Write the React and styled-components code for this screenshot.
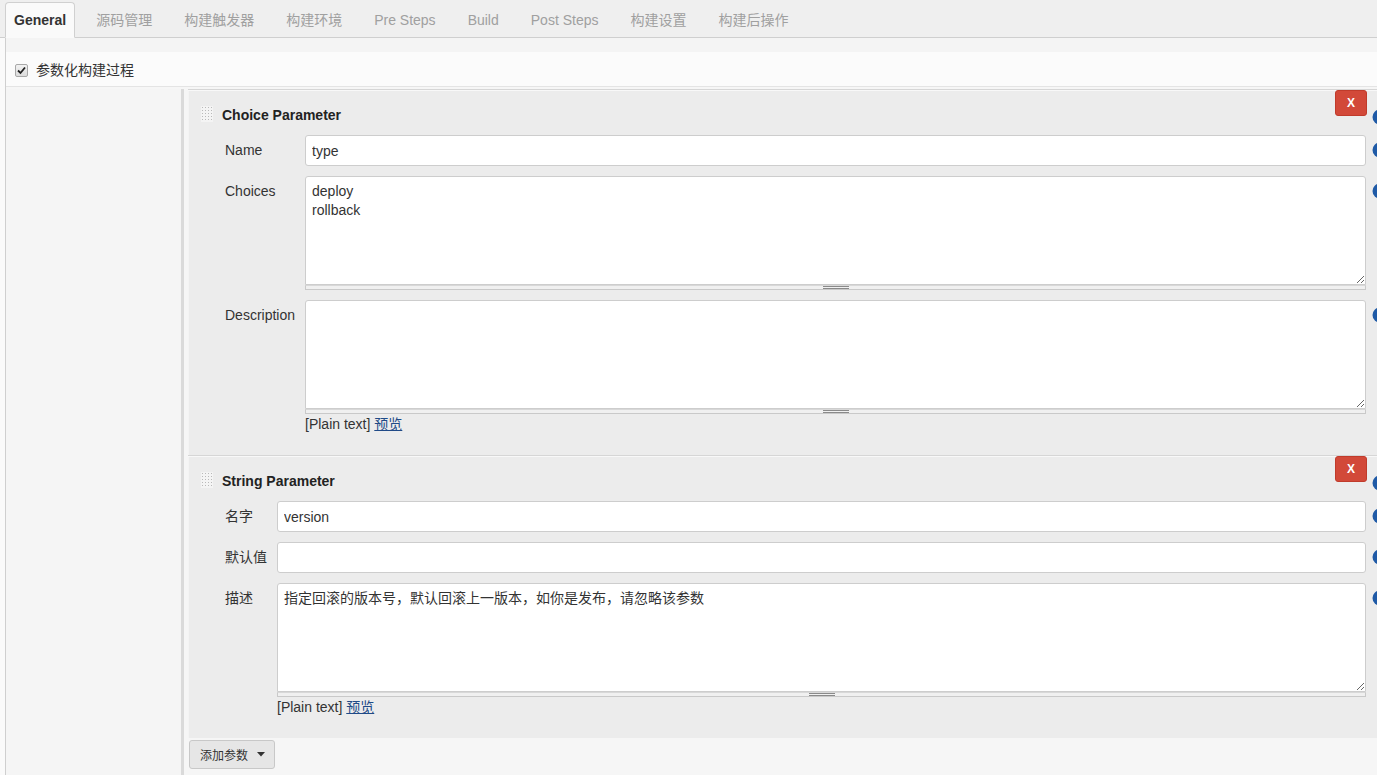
import styled, { createGlobalStyle } from "styled-components";

const GlobalStyle = createGlobalStyle`
  html, body {
    margin: 0;
    padding: 0;
    overflow-x: hidden;
    background: #fafafa;
  }
  body {
    font-family: "Liberation Sans", Arial, "Noto Sans CJK SC", sans-serif;
    font-size: 14px;
    color: #333;
  }
`;

const Page = styled.div`
  width: 100%;
  min-height: 775px;
`;

const TabBar = styled.div`
  display: flex;
  align-items: flex-end;
  gap: 10px;
  height: 37px;
  padding-left: 5px;
  background: #efefef;
  border-bottom: 1px solid #cfcfcf;
`;

const Tab = styled.div`
  height: 34px;
  line-height: 34px;
  padding: ${(props) => (props.active ? "0 8px" : "0 10px")};
  font-size: 14px;
  white-space: nowrap;
  color: ${(props) => (props.active ? "#333" : "#a0a0a0")};
  font-weight: ${(props) => (props.active ? "bold" : "normal")};
  background: ${(props) => (props.active ? "#fafafa" : "transparent")};
  border: 1px solid ${(props) => (props.active ? "#d0d0d0" : "transparent")};
  border-bottom-color: ${(props) => (props.active ? "#fafafa" : "transparent")};
  border-radius: 4px 4px 0 0;
  margin-bottom: -1px;
`;

const Section = styled.div`
  margin-left: 5px;
  border-left: 1px solid #cfcfcf;
  background: #f6f6f6;
`;

const CheckRow = styled.div`
  display: flex;
  align-items: center;
  gap: 8px;
  padding: 24px 9px 8px;
  line-height: 16px;
  background: linear-gradient(#f4f4f4 0, #f4f4f4 14px, #fbfbfb 14px);
  border-bottom: 1px solid #e4e4e4;
`;

const CheckBox = styled.span`
  display: inline-flex;
  align-items: center;
  justify-content: center;
  width: 11px;
  height: 11px;
  border: 1px solid #a8a8a8;
  border-radius: 2px;
  background: linear-gradient(#f2f2f2, #dcdcdc);
`;

const Nested = styled.div`
  display: flex;
  padding-top: 2px;
`;

const Indent = styled.div`
  width: 175px;
  flex-shrink: 0;
  background: #f5f5f5;
`;

const Repeat = styled.div`
  flex: 1;
  margin-right: -11px;
  border-left: 3px solid #dadada;
  padding-left: 4px;
  background: #f6f6f6;
  padding-bottom: 6px;
`;

const Block = styled.div`
  display: grid;
  grid-template-columns: auto 1fr 22px;
  row-gap: 10px;
  align-items: start;
  background: #ececec;
  border-top: 1px solid #d6d6d6;
  box-shadow: inset 0 1px 0 #f8f8f8, inset 1px 0 0 #f4f4f4;
  padding: 0 0 23px 13px;
`;

const TitleRow = styled.div`
  grid-column: 1 / 3;
  display: flex;
  justify-content: space-between;
  align-items: flex-start;
  margin-bottom: 2px;
`;

const TitleLeft = styled.div`
  display: flex;
  align-items: flex-start;
  gap: 9px;
  padding-top: 16px;
`;

const Handle = styled.div`
  width: 12px;
  height: 16px;
  background-color: #f4f4f4;
  background-image: radial-gradient(circle, #b9b9b9 0.8px, transparent 0.9px);
  background-size: 3px 3px;
`;

const Title = styled.div`
  font-weight: bold;
  font-size: 14px;
  line-height: 16px;
  padding-top: 1px;
  color: #222;
`;

const DeleteButton = styled.button`
  width: 32px;
  height: 26px;
  margin-right: -1px;
  border: 1px solid #c03b2b;
  border-radius: 3px;
  background: #d24939;
  color: #fff;
  font-family: "Liberation Sans", Arial, sans-serif;
  font-weight: bold;
  font-size: 12px;
  padding: 0;
`;

const Label = styled.div`
  padding: 7px 10px 0 24px;
  line-height: 16px;
  font-size: 14px;
  color: #333;
  white-space: nowrap;
`;

const Field = styled.div`
  min-width: 0;
`;

const Input = styled.input`
  box-sizing: border-box;
  width: 100%;
  height: 31px;
  padding: 0 6px;
  border: 1px solid #cdcdcd;
  border-radius: 3px;
  background: #fff;
  font-family: "Liberation Sans", Arial, "Noto Sans CJK SC", sans-serif;
  font-size: 14px;
  color: #333;
  outline: none;
`;

const TextArea = styled.textarea`
  display: block;
  box-sizing: border-box;
  width: 100%;
  height: 109px;
  padding: 5px 6px;
  border: 1px solid #cdcdcd;
  border-radius: 3px 3px 0 0;
  background: #fff;
  font-family: "Liberation Sans", Arial, "Noto Sans CJK SC", sans-serif;
  font-size: 14px;
  line-height: 19px;
  color: #333;
  outline: none;
  resize: vertical;
`;

const Grip = styled.div`
  position: relative;
  height: 3px;
  border: 1px solid #c9c9c9;
  border-top-color: #d8d8d8;
  background: #f0f0f0;
  &::after {
    content: "";
    position: absolute;
    left: 50%;
    top: 0;
    width: 26px;
    height: 1px;
    margin-left: -13px;
    border-top: 1px solid #8a8a8a;
    border-bottom: 1px solid #8a8a8a;
  }
`;

const Hint = styled.div`
  margin-top: 2px;
  line-height: 16px;
  font-size: 14px;
  color: #333;
`;

const PreviewLink = styled.a`
  color: #204a87;
  text-decoration: underline;
`;

const HelpCell = styled.div`
  padding-left: 6px;
  padding-top: ${(props) => props.top || 7}px;
  line-height: 0;
`;

const AddButton = styled.button`
  display: inline-flex;
  align-items: center;
  gap: 9px;
  height: 29px;
  margin: 2px 0 0 1px;
  padding: 0 9px 0 10px;
  border: 1px solid #c8c8c8;
  border-radius: 3px;
  background: #e6e6e6;
  font-family: "Liberation Sans", Arial, "Noto Sans CJK SC", sans-serif;
  font-size: 12px;
  color: #333;
`;

const HelpIcon = () => (
  <svg width="16" height="16" viewBox="0 0 16 16">
    <circle cx="8" cy="8" r="7.5" fill="#1f5aa6" />
    <text x="8" y="12" textAnchor="middle" fontSize="11" fontWeight="bold" fill="#fff" fontFamily="Liberation Sans, sans-serif">?</text>
  </svg>
);

const Caret = () => (
  <svg width="8" height="5" viewBox="0 0 8 5">
    <path d="M0 0 L8 0 L4 4.5 Z" fill="#333" />
  </svg>
);

const tabs = ["General", "源码管理", "构建触发器", "构建环境", "Pre Steps", "Build", "Post Steps", "构建设置", "构建后操作"];

const Row = ({ label, children, helpTop }) => (
  <>
    <Label>{label}</Label>
    <Field>{children}</Field>
    <HelpCell top={helpTop}>
      <HelpIcon />
    </HelpCell>
  </>
);

const BlockHeader = ({ title }) => (
  <>
    <TitleRow>
      <TitleLeft>
        <Handle />
        <Title>{title}</Title>
      </TitleLeft>
      <DeleteButton>X</DeleteButton>
    </TitleRow>
    <HelpCell top={19}>
      <HelpIcon />
    </HelpCell>
  </>
);

const App = () => {
  return (
    <Page>
      <GlobalStyle />
      <TabBar>
        {tabs.map((t, i) => (
          <Tab key={t} active={i === 0}>
            {t}
          </Tab>
        ))}
      </TabBar>
      <Section>
        <CheckRow>
          <CheckBox>
            <svg width="9" height="9" viewBox="0 0 9 9">
              <path d="M1 4.5 L3.5 7 L8 1.5" stroke="#222" strokeWidth="1.8" fill="none" />
            </svg>
          </CheckBox>
          <span>参数化构建过程</span>
        </CheckRow>
        <Nested>
          <Indent />
          <Repeat>
            <Block>
              <BlockHeader title="Choice Parameter" />
              <Row label="Name">
                <Input defaultValue="type" />
              </Row>
              <Row label="Choices">
                <TextArea defaultValue={"deploy\nrollback"} />
                <Grip />
              </Row>
              <Row label="Description">
                <TextArea defaultValue="" />
                <Grip />
                <Hint>
                  [Plain text] <PreviewLink>预览</PreviewLink>
                </Hint>
              </Row>
            </Block>
            <Block>
              <BlockHeader title="String Parameter" />
              <Row label="名字">
                <Input defaultValue="version" />
              </Row>
              <Row label="默认值">
                <Input defaultValue="" />
              </Row>
              <Row label="描述">
                <TextArea defaultValue="指定回滚的版本号，默认回滚上一版本，如你是发布，请忽略该参数" />
                <Grip />
                <Hint>
                  [Plain text] <PreviewLink>预览</PreviewLink>
                </Hint>
              </Row>
            </Block>
            <AddButton>
              添加参数 <Caret />
            </AddButton>
          </Repeat>
        </Nested>
      </Section>
    </Page>
  );
};

export default App;
